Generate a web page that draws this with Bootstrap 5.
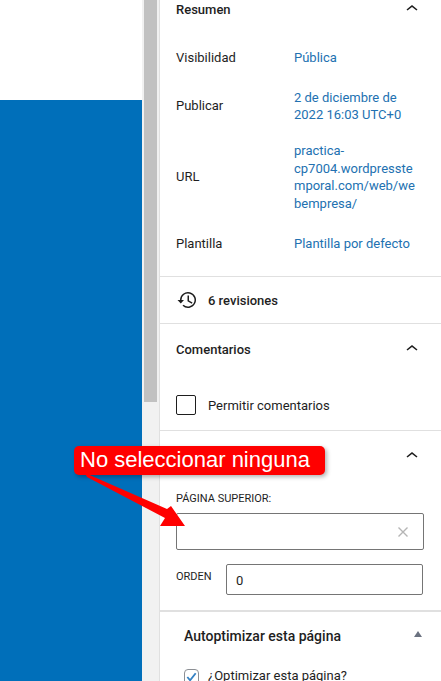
<!DOCTYPE html>
<html lang="es">
<head>
  <meta charset="UTF-8" />
  <meta name="viewport" content="width=device-width, initial-scale=1.0"/>
  <title>Resumen</title>
  <link href="https://cdn.jsdelivr.net/npm/bootstrap@5.3.0/dist/css/bootstrap.min.css" rel="stylesheet"/>
  <style>
    html, body { height: 681px; overflow: hidden; }
    body { font-family: Roboto, "Noto Sans", sans-serif; font-size: 13px; color: #1e1e1e; background: #fff; }
    .shot { height: 681px; }
    .canvas-col { width: 142px; }
    .canvas-top { height: 100px; }
    .canvas-blue { background: #006fba; }
    .bar-track { width: 17px; background: #f1f1f1; }
    .bar-thumb { height: 402px; width: 13px; margin-left: 2px; background: #c1c1c1; }
    .side { width: 282px; border-left: 1px solid #e0e0e0; }
    .side-sec { border-bottom: 1px solid #e0e0e0; padding: 0 17px 0 16px; }
    .sec-head { font-weight: 500; }
    .sec-head, .meta-label, .meta-val, .auto-title, .side-txt { padding-top: 2px; }
    .sec-first { height: 277px; }
    .head-first { height: 18px; }
    .meta-row { align-items: center; }
    .meta-label { width: 118px; flex: none; }
    .meta-val { color: #2271b1; line-height: 17.5px; width: 122px; overflow-wrap: anywhere; }
    .row-vis { height: 36px; margin-top: 21px; }
    .row-pub { height: 36px; margin-top: 12px; }
    .row-url { height: 70px; margin-top: 18px; }
    .row-tpl { height: 36px; margin-top: 14px; }
    .sec-rev { height: 47px; }
    .sec-com { height: 107px; }
    .sec-parent { height: 181px; border-bottom-width: 2px; }
    .sec-head-row { height: 50px; }
    .check-row { margin-top: 20px; }
    .box-check { width: 20px; height: 20px; border: 1px solid #1e1e1e; border-radius: 2px; }
    .field-label { font-size: 11px; line-height: 16px; margin-top: 10px; margin-bottom: 6px; text-transform: uppercase; }
    .parent-box { height: 37px; border: 1px solid #757575; border-radius: 2px; padding-right: 15px; }
    .order-line { margin-top: 14px; }
    .order-box { height: 31px; width: 197px; border: 1px solid #757575; border-radius: 2px; padding-left: 9px; }
    .order-label { width: 50px; font-size: 11px; line-height: 16px; margin-top: 5px; }
    .auto-title { font-size: 14px; font-weight: 500; }
    .auto-sec { padding: 0 17px 0 24px; }
    .auto-head { height: 46px; }
    .auto-arrow { margin-right: 2px; margin-top: -3px; }
    .auto-check { margin-top: 10px; }
    .tick-box { width: 15px; height: 16px; border: 1px solid #8c8f94; border-radius: 4px; background: #fff; }
    .auto-check-txt { margin-top: -2px; margin-left: 1px; }
    .note { position: absolute; left: 74px; top: 446px; height: 29px; width: 251px; background: #ff0000; color: #fff; border-radius: 5px; font-family: "Liberation Sans", Arial, sans-serif; font-size: 22px; line-height: 27px; padding-left: 6px; box-shadow: 2px 2px 4px rgba(0,0,0,.3); }
    .note-arrow { position: absolute; left: 80px; top: 470px; }
  </style>
</head>
<body>
  <div class="shot d-flex position-relative">
    <div class="canvas-col d-flex flex-column">
      <div class="canvas-top"></div>
      <div class="canvas-blue flex-grow-1"></div>
    </div>
    <div class="bar-track"><div class="bar-thumb"></div></div>
    <div class="side">
      <!-- Resumen -->
      <div class="side-sec sec-first">
        <div class="d-flex justify-content-between align-items-center head-first">
          <span class="sec-head">Resumen</span>
          <svg width="24" height="24" viewBox="0 0 24 24"><path d="M6.5 12.4L12 8l5.5 4.4-1 1.2L12 10l-4.5 3.6z" fill="#1e1e1e"/></svg>
        </div>
        <div class="d-flex meta-row row-vis"><span class="meta-label">Visibilidad</span><span class="meta-val">Pública</span></div>
        <div class="d-flex meta-row row-pub"><span class="meta-label">Publicar</span><span class="meta-val">2 de diciembre de 2022 16:03 UTC+0</span></div>
        <div class="d-flex meta-row row-url"><span class="meta-label">URL</span><span class="meta-val">practica-cp7004.wordpresstemporal.com/web/webempresa/</span></div>
        <div class="d-flex meta-row row-tpl"><span class="meta-label">Plantilla</span><span class="meta-val text-nowrap">Plantilla por defecto</span></div>
      </div>
      <!-- Revisiones -->
      <div class="side-sec sec-rev d-flex align-items-center gap-2">
        <svg width="24" height="24" viewBox="0 0 24 24"><path d="M4 12a8 8 0 1 1 2.5 5.8l1-1.1A6.5 6.5 0 1 0 5.5 12H8l-3.2 3.6L1.5 12zM11.5 7.5H13v5l3.5 2-.7 1.2-4.3-2.5z" fill="#1e1e1e"/></svg>
        <span class="sec-head">6 revisiones</span>
      </div>
      <!-- Comentarios -->
      <div class="side-sec sec-com">
        <div class="d-flex justify-content-between align-items-center sec-head-row">
          <span class="sec-head">Comentarios</span>
          <svg width="24" height="24" viewBox="0 0 24 24"><path d="M6.5 12.4L12 8l5.5 4.4-1 1.2L12 10l-4.5 3.6z" fill="#1e1e1e"/></svg>
        </div>
        <div class="d-flex align-items-center gap-2 check-row">
          <span class="box-check me-1"></span><span class="side-txt">Permitir comentarios</span>
        </div>
      </div>
      <!-- Atributos -->
      <div class="side-sec sec-parent">
        <div class="d-flex justify-content-end align-items-center sec-head-row">
          <svg width="24" height="24" viewBox="0 0 24 24"><path d="M6.5 12.4L12 8l5.5 4.4-1 1.2L12 10l-4.5 3.6z" fill="#1e1e1e"/></svg>
        </div>
        <div class="field-label">Página superior:</div>
        <div class="parent-box d-flex align-items-center justify-content-end">
          <svg width="10" height="10" viewBox="0 0 10 10"><path d="M.5.5l9 9M9.5.5l-9 9" stroke="#b5b5b5" stroke-width="1.4"/></svg>
        </div>
        <div class="d-flex align-items-start order-line">
          <span class="order-label">ORDEN</span>
          <div class="order-box d-flex align-items-center"><span class="side-txt">0</span></div>
        </div>
      </div>
      <!-- Autoptimizar -->
      <div class="auto-sec">
        <div class="d-flex justify-content-between align-items-center auto-head">
          <span class="auto-title">Autoptimizar esta página</span>
          <svg class="auto-arrow" width="8" height="6" viewBox="0 0 8 6"><path d="M4 0l4 6H0z" fill="#6b7280"/></svg>
        </div>
        <div class="d-flex align-items-center gap-2 auto-check">
          <span class="tick-box d-flex align-items-center justify-content-center">
            <svg width="14" height="14" viewBox="0 0 14 14"><path d="M2.5 7l3 3.5L11.5 3" fill="none" stroke="#3582c4" stroke-width="2"/></svg>
          </span>
          <span class="auto-check-txt">¿Optimizar esta página?</span>
        </div>
      </div>
    </div>
    <!-- Anotación -->
    <div class="note">No seleccionar ninguna</div>
    <svg class="note-arrow" width="110" height="60" viewBox="80 470 110 60"><path d="M85 473L167 509 171 506 185 526 160 526 165 518 87 477z" fill="#ff0000"/></svg>
  </div>
  <script src="https://cdn.jsdelivr.net/npm/bootstrap@5.3.0/dist/js/bootstrap.bundle.min.js"></script>
</body>
</html>
